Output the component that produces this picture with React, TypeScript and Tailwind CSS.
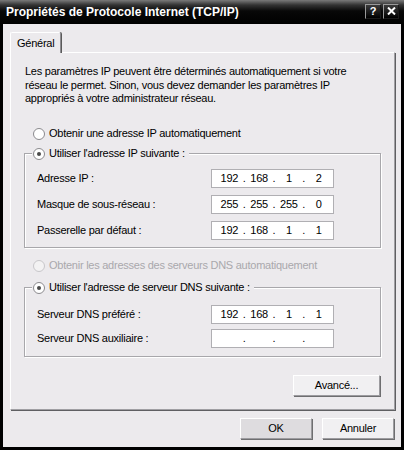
import { Fragment } from "react";

function Radio({ checked, disabled }: { checked?: boolean; disabled?: boolean }) {
  return (
    <span
      className={`w-[12px] h-[12px] rounded-full border flex items-center justify-center shrink-0 ${
        disabled ? "border-[#c8c7ca] bg-[#f3f2f3]" : "border-[#8b8a8e] bg-white"
      }`}
    >
      {checked && <span className="w-[4px] h-[4px] rounded-full bg-[#4a4a4a]" />}
    </span>
  );
}

function IpBox({ parts }: { parts: string[] }) {
  return (
    <div className="w-[123px] h-[19px] border border-[#b0afb3] bg-white flex items-center pl-[3px]">
      {parts.map((p, i) => (
        <Fragment key={i}>
          <span className="w-[29px] text-center">{p}</span>
          {i < 3 && <span className="w-[1px] flex justify-center">.</span>}
        </Fragment>
      ))}
    </div>
  );
}

function Row({ label, parts }: { label: string; parts: string[] }) {
  return (
    <div className="flex items-center h-[19px]">
      <span className="w-[174px]">{label}</span>
      <IpBox parts={parts} />
    </div>
  );
}

function Button({ children, width, dark }: { children: string; width: string; dark?: boolean }) {
  return (
    <button
      className={`${width} h-[21px] border border-t-white border-l-white border-r-[#9c9b9f] border-b-[#9c9b9f] shadow-[1px_1px_0_0_#6e6e70] flex items-center justify-center ${
        dark ? "bg-[#dedcdf]" : "bg-[#f1f0f2]"
      }`}
    >
      {children}
    </button>
  );
}

export default function App() {
  const bg = "bg-[#eceaed]";

  return (
    <div className="w-[404px] h-[450px] bg-black flex flex-col font-['Liberation_Sans',Arial,sans-serif] text-[11px] tracking-[-0.25px] text-black select-none">
      {/* Title bar */}
      <div className="h-[24px] flex items-center pl-[6px] pr-[5px] bg-[linear-gradient(to_bottom,#7a7a7a_0px,#333_5px,#080808_11px,#000_24px)]">
        <span className="text-white font-bold text-[12px] tracking-normal">
          Propriétés de Protocole Internet (TCP/IP)
        </span>
        <div className="ml-auto flex gap-[2px] mt-[-2px]">
          <div className="w-[16px] h-[15px] border border-t-[#9a9a9a] border-l-[#9a9a9a] border-r-[#1a1a1a] border-b-[#1a1a1a] bg-[linear-gradient(to_bottom,#3a3a3a,#000)] flex items-center justify-center text-white font-bold text-[11px] tracking-normal">
            ?
          </div>
          <div className="w-[16px] h-[15px] border border-t-[#9a9a9a] border-l-[#9a9a9a] border-r-[#1a1a1a] border-b-[#1a1a1a] bg-[linear-gradient(to_bottom,#3a3a3a,#000)] flex items-center justify-center">
            <svg width="9" height="8" viewBox="0 0 9 8">
              <path d="M1 0.5 L8 7.5 M8 0.5 L1 7.5" stroke="white" strokeWidth="2" />
            </svg>
          </div>
        </div>
      </div>

      {/* Dialog body */}
      <div className={`flex-1 mx-[3px] mb-[3px] ${bg} flex flex-col pl-[7px] pr-[6px] pt-[8px]`}>
        {/* Tab header */}
        <div className="flex">
          <div
            className={`relative z-10 h-[21px] -mb-[1px] px-[6px] pt-[2px] ${bg} border-l border-t border-r border-l-white border-t-white border-r-[#8e8d91] shadow-[1px_0_0_0_#5a5a5a] rounded-t-[2px]`}
          >
            Général
          </div>
        </div>

        {/* Tab panel */}
        <div className="h-[358px] border border-t-white border-l-white border-r-[#a09fa3] border-b-[#a09fa3] shadow-[1px_1px_0_0_#5f5f62] flex flex-col pt-[12px]">
          <p className="pl-[14px] pr-[10px] leading-[13.5px]">
            Les paramètres IP peuvent être déterminés automatiquement si votre
            <br />
            réseau le permet. Sinon, vous devez demander les paramètres IP
            <br />
            appropriés à votre administrateur réseau.
          </p>

          <div className="mt-[20px] ml-[22px] h-[16px] flex items-center gap-[4px]">
            <Radio />
            <span>Obtenir une adresse IP automatiquement</span>
          </div>

          <fieldset className="ml-[13px] w-[357px] mt-[5px] border border-[#a8a7ab] shadow-[inset_1px_1px_0_0_#fff,1px_1px_0_0_#fff] pb-[7px]">
            <legend className={`ml-[7px] px-[1px] h-[14px] flex items-center gap-[4px] ${bg}`}>
              <Radio checked />
              <span className="pr-[3px]">Utiliser l'adresse IP suivante :</span>
            </legend>
            <div className="mt-[8px] pl-[12px] flex flex-col gap-[7px]">
              <Row label="Adresse IP :" parts={["192", "168", "1", "2"]} />
              <Row label="Masque de sous-réseau :" parts={["255", "255", "255", "0"]} />
              <Row label="Passerelle par défaut :" parts={["192", "168", "1", "1"]} />
            </div>
          </fieldset>

          <div className="mt-[10px] ml-[22px] h-[16px] flex items-center gap-[4px] text-[#a9a8ac]">
            <Radio disabled />
            <span>Obtenir les adresses des serveurs DNS automatiquement</span>
          </div>

          <fieldset className="ml-[13px] w-[357px] mt-[7px] border border-[#a8a7ab] shadow-[inset_1px_1px_0_0_#fff,1px_1px_0_0_#fff] pb-[8px]">
            <legend className={`ml-[7px] px-[1px] h-[14px] flex items-center gap-[4px] ${bg}`}>
              <Radio checked />
              <span className="pr-[3px]">Utiliser l'adresse de serveur DNS suivante :</span>
            </legend>
            <div className="mt-[10px] pl-[12px] flex flex-col gap-[5px]">
              <Row label="Serveur DNS préféré :" parts={["192", "168", "1", "1"]} />
              <Row label="Serveur DNS auxiliaire :" parts={["", "", "", ""]} />
            </div>
          </fieldset>

          <div className="mt-[18px] ml-[282px]">
            <Button width="w-[87px]">Avancé...</Button>
          </div>
        </div>

        {/* Dialog buttons */}
        <div className="mt-[8px] flex justify-end gap-[10px] pr-[1px]">
          <Button width="w-[72px]" dark>
            OK
          </Button>
          <Button width="w-[72px]">Annuler</Button>
        </div>
      </div>
    </div>
  );
}
